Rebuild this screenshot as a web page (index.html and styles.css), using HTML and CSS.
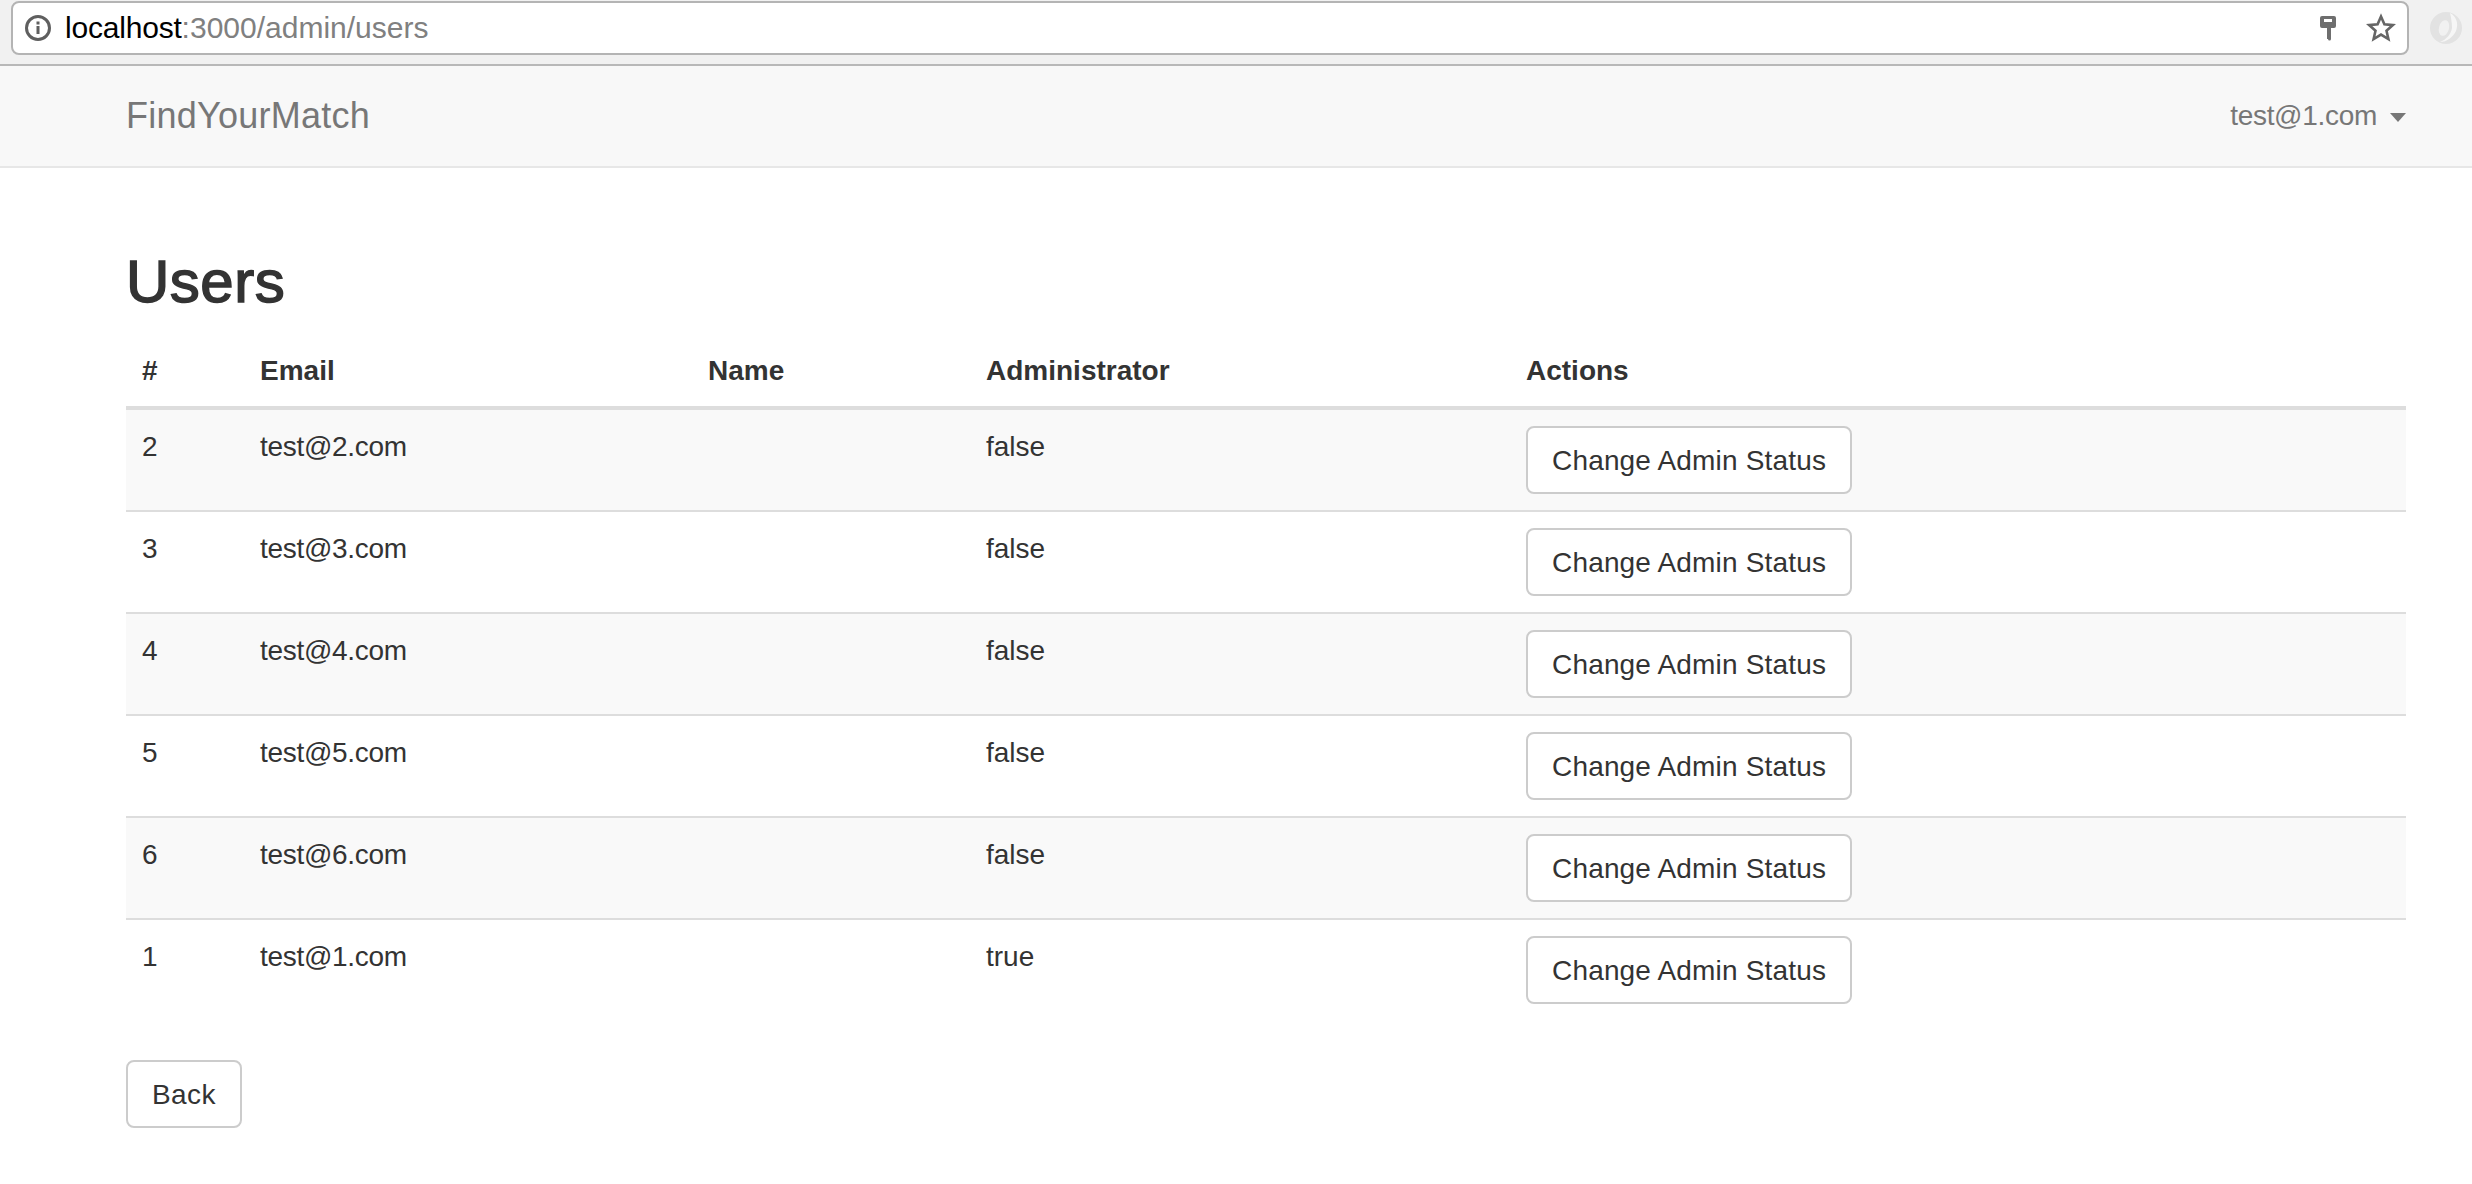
FILE: index.html
```html
<!DOCTYPE html>
<html lang="en">
    <head>
        <meta charset="UTF-8">
        <meta name="viewport" content="width=device-width, initial-scale=1.0">
        <title>Users</title>
        <link rel="stylesheet" href="styles.css">
    </head>
    <body>
        <div class="browser-bar">
            <div class="address">
                <svg class="info-icon" width="28" height="28" viewBox="0 0 28 28">
                    <circle cx="14" cy="14" r="11.5" fill="none" stroke="#5f5f5f" stroke-width="3"/>
                    <rect x="12.5" y="12" width="3" height="8" fill="#5f5f5f"/>
                    <rect x="12.5" y="7.5" width="3" height="3" fill="#5f5f5f"/>
                </svg>
                <span class="url"><span class="host">localhost</span>:3000/admin/users</span>
                <svg class="key-icon" width="18" height="26" viewBox="0 0 18 26">
                    <path d="M3 1h12a2 2 0 0 1 2 2v8a2 2 0 0 1-2 2h-3v11a1.5 1.5 0 0 1-3 0h-1V13H3a2 2 0 0 1-2-2V3a2 2 0 0 1 2-2z" fill="#6e6e6e"/>
                    <rect x="5" y="4" width="8" height="3" fill="#fff"/>
                </svg>
                <svg class="star-icon" width="30" height="30" viewBox="0 0 30 30">
                    <path d="M15 3.5l3.4 7.8 8.5.8-6.4 5.6 1.9 8.3-7.4-4.4-7.4 4.4 1.9-8.3-6.4-5.6 8.5-.8z" fill="none" stroke="#666" stroke-width="2.6" stroke-linejoin="miter"/>
                </svg>
            </div>
            <svg class="ext-icon" width="34" height="34" viewBox="0 0 34 34">
                <circle cx="17" cy="17" r="16" fill="#e2e2e2"/>
                <path d="M21 2c6 3 9 10 6 18-3 6-9 11-16 11 7-3 11-8 12-14 0-5-1-11-2-15z" fill="#f6f6f6"/>
                <ellipse cx="15" cy="17" rx="5" ry="8" fill="#f1f1f1" transform="rotate(15 15 17)"/>
            </svg>
        </div>

        <nav class="navbar">
            <a class="brand">FindYourMatch</a>
            <a class="user-menu">test@1.com<span class="caret"></span></a>
        </nav>

        <div class="container">
            <h2 class="title">Users</h2>
            <table class="users">
                <colgroup>
                    <col class="col-id">
                    <col class="col-email">
                    <col class="col-name">
                    <col class="col-admin">
                    <col>
                </colgroup>
                <thead>
                    <tr><th>#</th><th>Email</th><th>Name</th><th>Administrator</th><th>Actions</th></tr>
                </thead>
                <tbody>
                    <tr><td>2</td><td class="email">test@2.com</td><td></td><td>false</td><td><a class="btn">Change Admin Status</a></td></tr>
                    <tr><td>3</td><td class="email">test@3.com</td><td></td><td>false</td><td><a class="btn">Change Admin Status</a></td></tr>
                    <tr><td>4</td><td class="email">test@4.com</td><td></td><td>false</td><td><a class="btn">Change Admin Status</a></td></tr>
                    <tr><td>5</td><td class="email">test@5.com</td><td></td><td>false</td><td><a class="btn">Change Admin Status</a></td></tr>
                    <tr><td>6</td><td class="email">test@6.com</td><td></td><td>false</td><td><a class="btn">Change Admin Status</a></td></tr>
                    <tr><td>1</td><td class="email">test@1.com</td><td></td><td>true</td><td><a class="btn">Change Admin Status</a></td></tr>
                </tbody>
            </table>
            <a class="btn back">Back</a>
        </div>
    </body>
</html>
```

FILE: styles.css
```css
*{
    box-sizing: border-box;
}
html, body{
    margin: 0;
    padding: 0;
    height: 100%;
    overflow: hidden;
}
body{
    font-family: "Liberation Sans", Arial, sans-serif;
    font-size: 28px;
    line-height: 40px;
    color: #333;
    background: #fff;
}
.browser-bar{
    display: flex;
    align-items: flex-start;
    height: 66px;
    padding: 1px 0 0 11px;
    background: #f1f1f1;
    border-bottom: 2px solid #b8b8b8;
}
.address{
    display: flex;
    align-items: center;
    width: 2398px;
    height: 54px;
    padding: 0 11px 0 11px;
    background: #fff;
    border: 2px solid #b4b4b4;
    border-radius: 8px;
}
.url{
    flex: 1;
    margin-left: 13px;
    font-size: 30px;
    color: #808080;
}
.host{
    color: #000;
    letter-spacing: -0.2px;
}
.key-icon{
    margin-right: 29px;
}
.ext-icon{
    margin: 10px 0 0 20px;
}
.navbar{
    display: flex;
    justify-content: space-between;
    align-items: center;
    height: 102px;
    padding: 0 66px 0 126px;
    background: #f8f8f8;
    border-bottom: 2px solid #e7e7e7;
    color: #777;
}
.brand{
    font-size: 36px;
    letter-spacing: 0.25px;
}
.user-menu{
    letter-spacing: -0.3px;
}
.caret{
    display: inline-block;
    margin-left: 13px;
    vertical-align: middle;
    border-top: 9px solid #777;
    border-left: 8px solid transparent;
    border-right: 8px solid transparent;
}
.container{
    padding: 81px 66px 0 126px;
}
.title{
    margin: 0 0 19px;
    font-size: 60px;
    font-weight: normal;
    line-height: 66px;
    letter-spacing: 0.5px;
    -webkit-text-stroke: 1.5px #333;
}
.users{
    width: 100%;
    margin-bottom: 40px;
    border-collapse: collapse;
    table-layout: fixed;
}
.col-id{
    width: 118px;
}
.col-email{
    width: 448px;
}
.col-name{
    width: 278px;
}
.col-admin{
    width: 540px;
}
.users th, .users td{
    padding: 17px 16px 15px;
    text-align: left;
    vertical-align: top;
    line-height: 40px;
}
.users th{
    border-bottom: 4px solid #ddd;
}
.users td{
    border-top: 2px solid #ddd;
}
.users td.email{
    letter-spacing: -0.3px;
}
.users td .btn{
    margin: -1px 0 1px;
}
.users thead + tbody tr:first-child td{
    border-top: 0;
}
.users tbody tr:nth-child(odd){
    background: #f9f9f9;
}
.btn{
    display: inline-block;
    height: 68px;
    padding: 13px 24px 11px;
    color: #333;
    line-height: 40px;
    letter-spacing: 0.17px;
    background: #fff;
    border: 2px solid #ccc;
    border-radius: 8px;
}
.back{
    letter-spacing: 0.4px;
}
```
